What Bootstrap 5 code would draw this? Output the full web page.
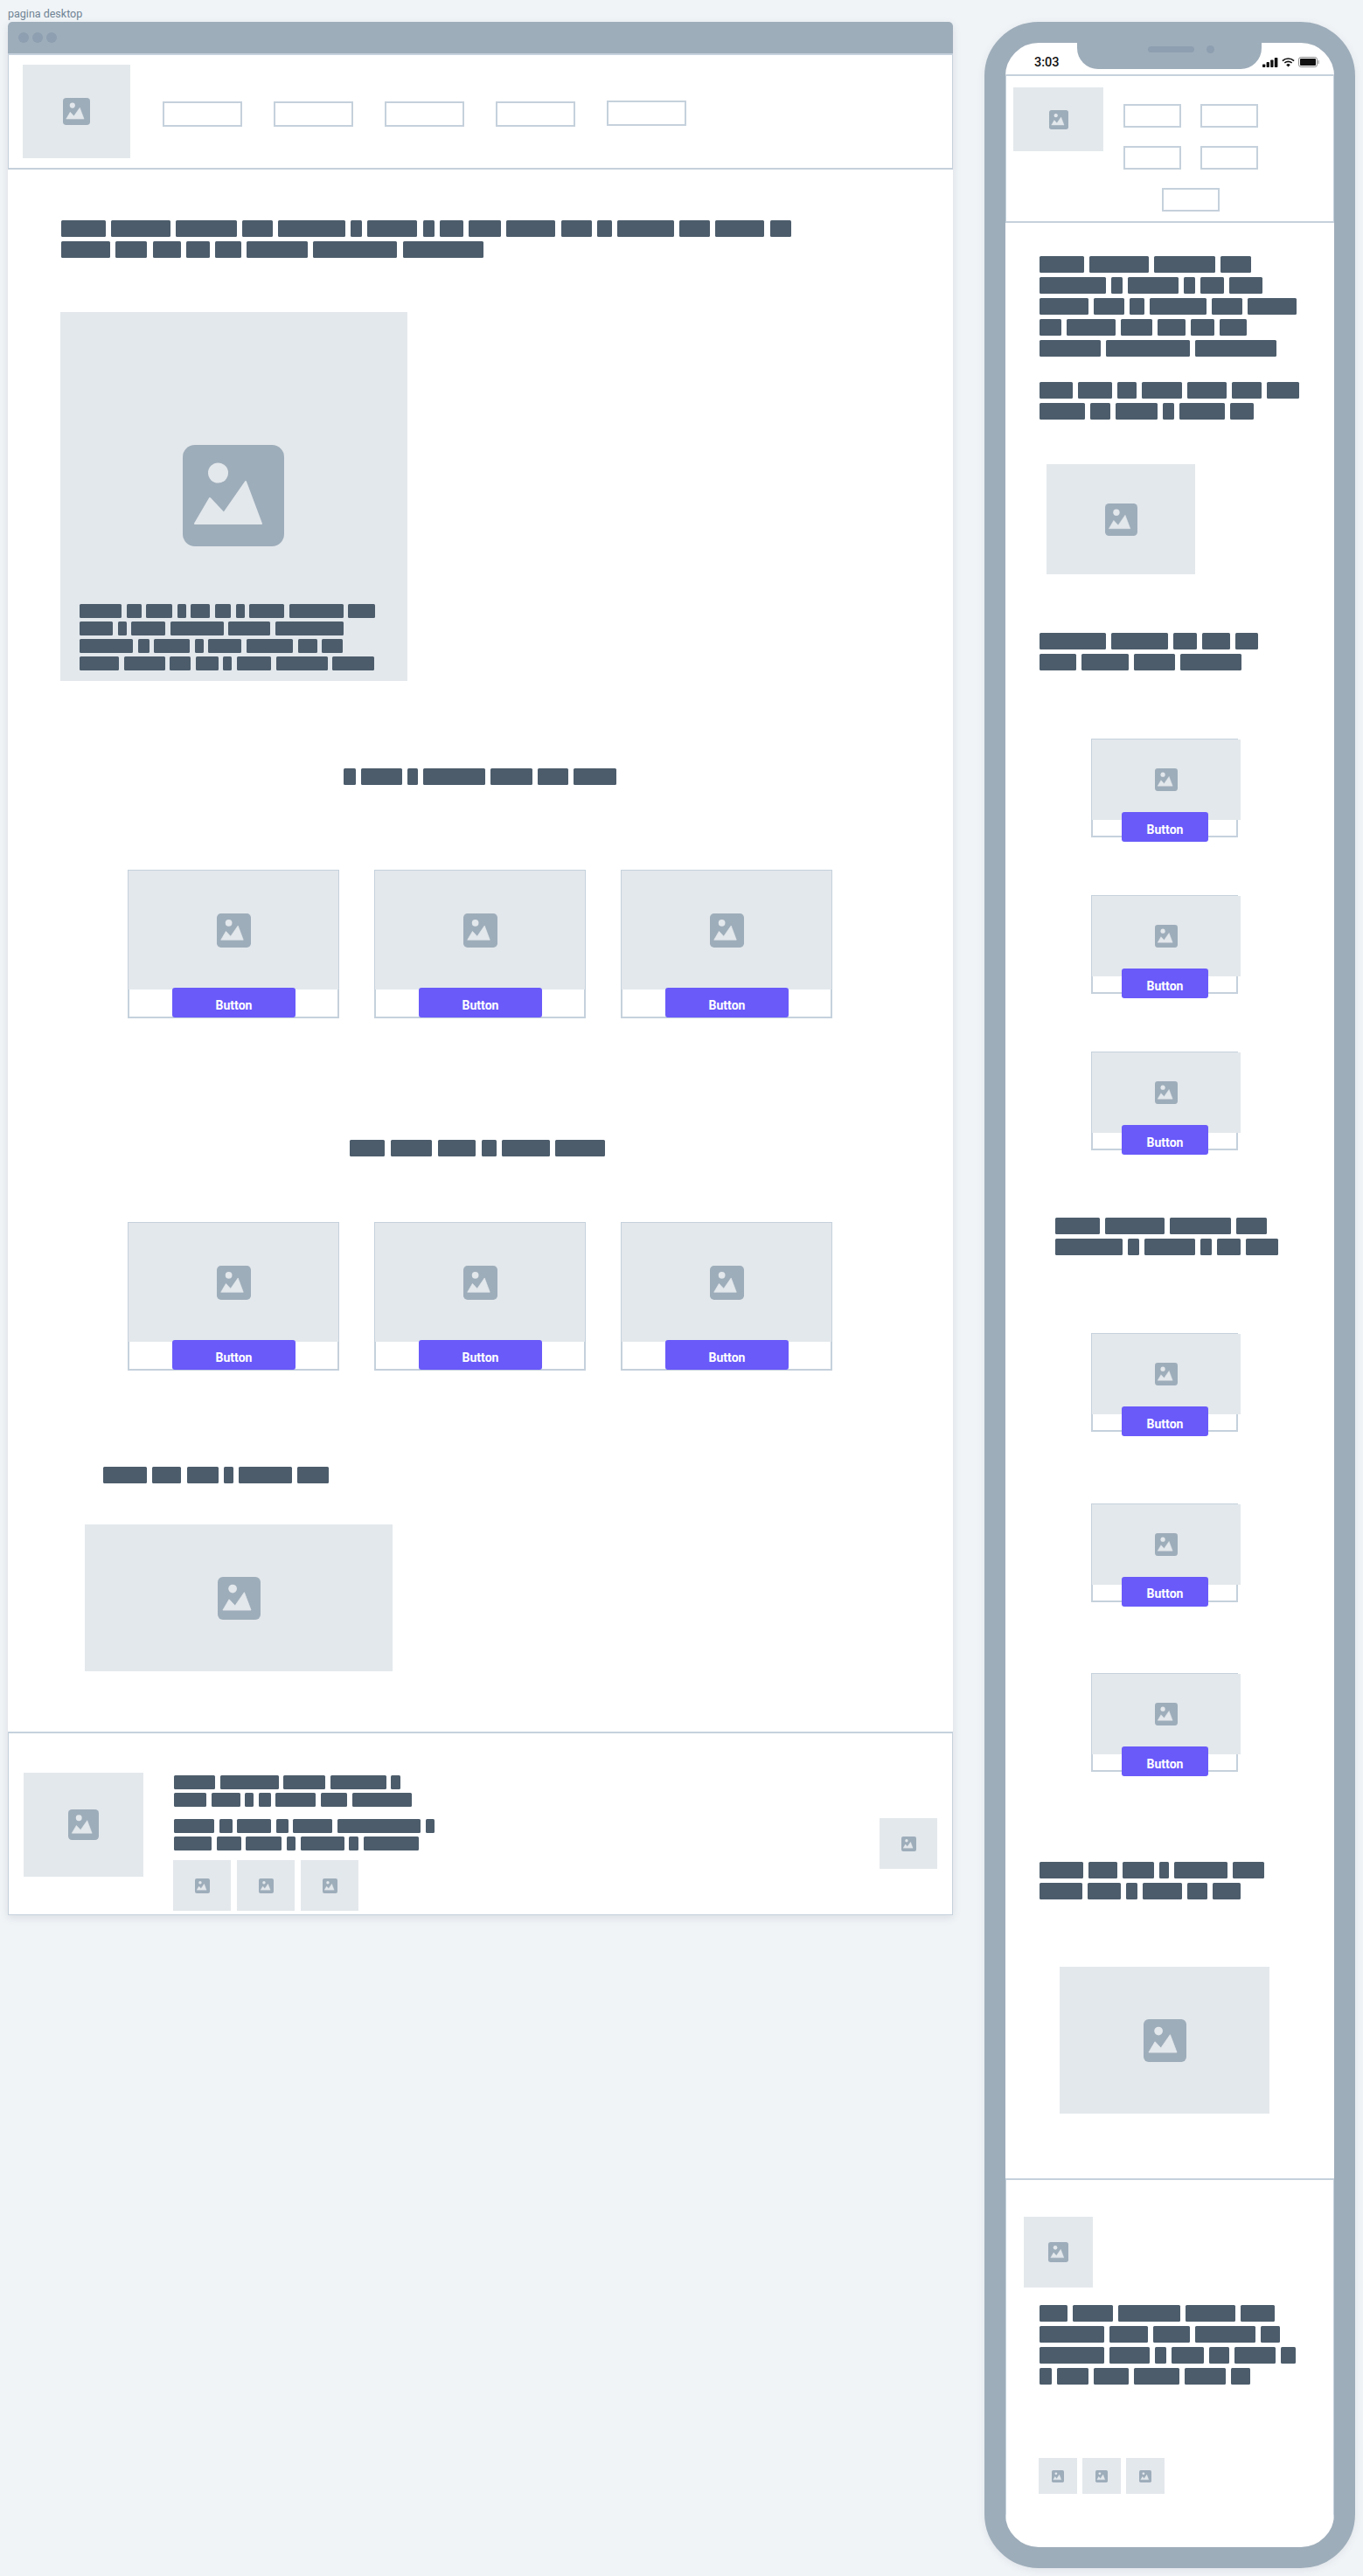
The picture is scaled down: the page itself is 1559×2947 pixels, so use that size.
<!DOCTYPE html>
<html lang="it">
<head>
    <meta charset="UTF-8">
    <title>Wireframe pagina desktop</title>
    <link href="https://cdn.jsdelivr.net/npm/bootstrap@5.3.0/dist/css/bootstrap.min.css" rel="stylesheet">
    <style>
        body { background: #f0f4f7; font-family: Roboto, "Liberation Sans", sans-serif; height: 2947px; overflow: hidden; }

        /* shared wireframe pieces */
        .wf-para { display: flex; flex-direction: column; gap: 5px; flex-shrink: 0; }
        .wf-line { display: flex; gap: 6px; }
        .wf-blk { display: block; height: 19px; background: #4c5c6b; border-radius: 1.5px; flex-shrink: 0; }
        .wf-wide .wf-line { gap: 6.3px; }
        .wf-tiny { gap: 4px; }
        .wf-tiny .wf-line { gap: 5.6px; }
        .wf-tiny .wf-blk { height: 16px; }
        .ph-img { background: #e3e8ec; display: flex; align-items: center; justify-content: center; flex-shrink: 0; }
        .nav-box { border: 2px solid #c5d1dc; background: #fff; flex-shrink: 0; }
        .wf-btn { display: block; background: #695af9; color: #fff; border: 0; border-radius: 3px; padding: 5px 0 0; height: 34px; font-size: 14px; font-weight: 700; line-height: 1; position: relative; }
        .wf-card { border: 2px solid #c5d1dc; background: #fff; flex-shrink: 0; }

        /* desktop frame */
        .desk-col { width: 1081px; margin-left: 9px; flex-shrink: 0; }
        .desk-label { height: 25px; font-size: 12.5px; line-height: 1; padding-top: 10px; color: #6f8394; }
        .desk-frame { background: #fff; height: 2166px; border-radius: 5px 5px 0 0; box-shadow: 0 3px 10px rgba(76, 92, 107, .14); }
        .desk-chrome { height: 38px; background: #9eadba; border-bottom: 2px solid #c5d1dc; border-radius: 5px 5px 0 0; padding-left: 12px; gap: 4px; }
        .desk-dot { width: 12px; height: 12px; border-radius: 50%; background: #8d9fb0; }
        .desk-head { height: 131px; border: 1px solid #c5d1dc; border-width: 0 1px 2px; }
        .desk-logo { width: 123px; height: 107px; margin: 11px 37px 0 16px; }
        .desk-nav { gap: 36px; margin-top: 53px; }
        .desk-nav .nav-box { width: 91px; height: 29px; }
        .desk-nav .nav-box:last-child { margin-top: -1px; }
        .desk-intro { margin: 58px 0 0 61px; }
        .desk-hero { width: 397px; height: 422px; margin: 62px 0 0 60px; padding-left: 22px; flex-direction: column; align-items: flex-start; justify-content: flex-start; }
        .desk-hero .ico-hero { margin: 152px 0 0 118px; }
        .desk-hero .wf-para { margin-top: 66px; }
        .sec-one { margin: 100px 0 0 384px; }
        .sec-two { margin: 139px 0 0 391px; }
        .sec-three { margin: 110px 0 0 109px; }
        .desk-cards { gap: 40px; margin: 97px 0 0 137px; }
        .sec-two + .desk-cards { margin-top: 75px; }
        .desk-card { width: 242px; height: 170px; }
        .desk-card .ph-img { width: 240px; height: 136px; margin: -1px 0 0 -1px; }
        .desk-card .wf-btn { width: 141px; margin: -2px 0 0 49px; }
        .desk-wide { width: 352px; height: 168px; margin: 47px 0 0 88px; }
        .desk-foot { height: 210px; margin-top: 69px; border: 1px solid #c5d1dc; border-top-width: 2px; }
        .desk-foot-logo { width: 137px; height: 119px; margin: 45px 35px 0 17px; }
        .desk-foot-text { padding-top: 48px; }
        .desk-foot-text .wf-para + .wf-para { margin-top: 14px; }
        .desk-thumbs { gap: 7px; margin: 11px 0 0 -1px; }
        .desk-thumb { width: 66px; height: 58px; }
        .desk-foot-side { margin: 97px 17px 0 auto; }

        /* icon sizes */
        .ico-hero { width: 116px; height: 116px; flex-shrink: 0; }
        .ico-31 { width: 31px; height: 31px; }
        .ico-39 { width: 39px; height: 39px; }
        .ico-49 { width: 49px; height: 49px; }
        .ico-35 { width: 35px; height: 35px; }
        .ico-17 { width: 17px; height: 17px; }
        .ico-21 { width: 22px; height: 22px; }
        .ico-26 { width: 26px; height: 26px; }
        .ico-37 { width: 37px; height: 37px; }
        .ico-23 { width: 23px; height: 23px; }
        .ico-14 { width: 14px; height: 14px; }

        /* phone */
        .ph-shell { width: 424px; height: 2913px; margin: 25px 0 0 36px; border: 24px solid #9eadba; border-radius: 62px; background: #fff; overflow: hidden; flex-shrink: 0; box-shadow: 0 2px 8px rgba(76, 92, 107, .1); }
        .ph-inner { border-radius: 38px; overflow: hidden; height: 100%; }
        .ph-notch { left: 82px; top: 0; width: 211px; height: 30px; background: #9eadba; border-radius: 0 0 24px 24px; }
        .ph-speaker { width: 53px; height: 7px; background: #8d9fb0; border-radius: 4px; }
        .ph-camera { width: 9px; height: 9px; background: #8d9fb0; border-radius: 50%; margin-left: 14px; }
        .ph-notch-row { padding: 3px 0 0 26px; }
        .ph-status { height: 36px; padding: 16px 17px 0 33px; color: #111; font-size: 14.5px; font-weight: 500; line-height: 1; }
        .ph-status-icons { gap: 4px; }
        .ph-head { height: 170px; border: 1px solid #c5d1dc; border-width: 2px 1px; }
        .ph-logo { width: 103px; height: 73px; margin: 13px 23px 0 8px; }
        .ph-nav { width: 154px; gap: 21px 22px; margin-top: 32px; }
        .ph-nav .nav-box { width: 66px; height: 27px; }
        .ph-para-a { margin: 38px 0 0 39px; }
        .ph-para-b { margin: 29px 0 0 39px; }
        .ph-img-a { width: 170px; height: 126px; margin: 51px 0 0 47px; }
        .ph-para-c { margin: 67px 0 0 39px; }
        .ph-cards-a { gap: 66px; margin: 78px 0 0 98px; }
        .ph-para-d { margin: 77px 0 0 57px; }
        .ph-cards-b { gap: 81.5px; margin: 89px 0 0 98px; }
        .ph-para-e { margin: 103px 0 0 39px; }
        .ph-img-b { width: 240px; height: 168px; margin: 77px 0 0 62px; }
        .ph-card { width: 168px; height: 113px; }
        .ph-card .ph-img { width: 170px; height: 92px; margin: -1px 0 0 -1px; }
        .ph-card .wf-btn { width: 99px; margin: -9px 0 0 33px; }
        .ph-foot { margin-top: 74px; flex-grow: 1; border: 1px solid #c5d1dc; border-width: 2px 1px 0; }
        .ph-foot-logo { width: 79px; height: 81px; margin: 42px 0 0 20px; }
        .ph-foot-text { margin: 20px 0 0 38px; }
        .ph-thumbs { gap: 6px; margin: 84px 0 0 37px; }
        .ph-thumb { width: 44px; height: 41px; }
    </style>
</head>
<body>
    <svg width="0" height="0" class="position-absolute">
        <symbol id="pic" viewBox="0 0 116 116">
            <rect width="116" height="116" rx="14" fill="#9eadba"/>
            <circle cx="40.5" cy="32" r="11.5" fill="#e3e8ec"/>
            <path d="M14 90 L31 61 L47 78 L72 42 L90 90 Z" fill="#e3e8ec" stroke="#e3e8ec" stroke-width="2" stroke-linejoin="round"/>
        </symbol>
    </svg>

    <div class="d-flex align-items-start">
        <!-- desktop -->
        <div class="desk-col">
            <div class="desk-label">pagina desktop</div>
            <div class="desk-frame d-flex flex-column align-items-stretch">
                <div class="desk-chrome d-flex align-items-center">
                    <span class="desk-dot"></span><span class="desk-dot"></span><span class="desk-dot"></span>
                </div>
                <div class="desk-head d-flex align-items-start">
                    <div class="ph-img desk-logo"><svg class="ico-31"><use href="#pic"/></svg></div>
                    <div class="desk-nav d-flex align-items-start">
                        <div class="nav-box"></div><div class="nav-box"></div><div class="nav-box"></div><div class="nav-box"></div><div class="nav-box"></div>
                    </div>
                </div>

                <div class="wf-para wf-wide desk-intro" data-l="50.5 68 69.5 35 76.5 13 57 13 27 37 56 35 17 64.5 35 56 24.5|56 36 32 27 30 69.5 96 92.6"></div>

                <div class="ph-img desk-hero">
                    <svg class="ico-hero"><use href="#pic"/></svg>
                    <div class="wf-para wf-tiny" data-l="48 17 30 10 22 18 10 40 62 31|38 10 39 61 48 78|61 13 41 10 38 53 22 24|45 47 24 26 10 39.5 58.5 48"></div>
                </div>

                <div class="wf-para sec-one" data-l="14.3 46.4 12.4 70.9 48.4 34.5 49"></div>
                <div class="desk-cards d-flex">
                    <div class="wf-card desk-card"><div class="ph-img"><svg class="ico-39"><use href="#pic"/></svg></div><button class="btn wf-btn">Button</button></div>
                    <div class="wf-card desk-card"><div class="ph-img"><svg class="ico-39"><use href="#pic"/></svg></div><button class="btn wf-btn">Button</button></div>
                    <div class="wf-card desk-card"><div class="ph-img"><svg class="ico-39"><use href="#pic"/></svg></div><button class="btn wf-btn">Button</button></div>
                </div>

                <div class="wf-para wf-wide sec-two" data-l="40.4 47.8 43.7 17 55 57"></div>
                <div class="desk-cards d-flex">
                    <div class="wf-card desk-card"><div class="ph-img"><svg class="ico-39"><use href="#pic"/></svg></div><button class="btn wf-btn">Button</button></div>
                    <div class="wf-card desk-card"><div class="ph-img"><svg class="ico-39"><use href="#pic"/></svg></div><button class="btn wf-btn">Button</button></div>
                    <div class="wf-card desk-card"><div class="ph-img"><svg class="ico-39"><use href="#pic"/></svg></div><button class="btn wf-btn">Button</button></div>
                </div>

                <div class="wf-para wf-wide sec-three" data-l="50 33 36 11 61 36"></div>
                <div class="ph-img desk-wide"><svg class="ico-49"><use href="#pic"/></svg></div>

                <div class="desk-foot d-flex align-items-start">
                    <div class="ph-img desk-foot-logo"><svg class="ico-35"><use href="#pic"/></svg></div>
                    <div class="desk-foot-text">
                        <div class="wf-para wf-tiny" data-l="47 67 48 64 10.5|37 33 10 14 46 30 68"></div>
                        <div class="wf-para wf-tiny" data-l="46 15 39 14 45 95 10.5|43 28 41 10.5 50 10.5 63"></div>
                        <div class="desk-thumbs d-flex">
                            <div class="ph-img desk-thumb"><svg class="ico-17"><use href="#pic"/></svg></div>
                            <div class="ph-img desk-thumb"><svg class="ico-17"><use href="#pic"/></svg></div>
                            <div class="ph-img desk-thumb"><svg class="ico-17"><use href="#pic"/></svg></div>
                        </div>
                    </div>
                    <div class="ph-img desk-thumb desk-foot-side"><svg class="ico-17"><use href="#pic"/></svg></div>
                </div>
            </div>
        </div>

        <!-- mobile -->
        <div class="ph-shell">
            <div class="ph-inner d-flex flex-column position-relative">
                <div class="ph-notch position-absolute">
                    <div class="ph-notch-row d-flex align-items-center justify-content-center">
                        <span class="ph-speaker"></span><span class="ph-camera"></span>
                    </div>
                </div>
                <div class="ph-status d-flex justify-content-between align-items-start">
                    <span>3:03</span>
                    <div class="ph-status-icons d-flex align-items-center">
                        <svg width="18" height="11" viewBox="0 0 18 11" fill="#111"><rect x="0" y="7.5" width="3.3" height="3.5" rx=".8"/><rect x="4.6" y="5" width="3.3" height="6" rx=".8"/><rect x="9.2" y="2.5" width="3.3" height="8.5" rx=".8"/><rect x="13.8" y="0" width="3.6" height="11" rx=".8"/></svg>
                        <svg width="15" height="11" viewBox="0 0 15 11"><path d="M.9 3.6a9.6 9.6 0 0 1 13.2 0M3.3 6a6.2 6.2 0 0 1 8.4 0" fill="none" stroke="#111" stroke-width="1.6"/><path d="M5.2 8.2a3.2 3.2 0 0 1 4.6 0L7.5 10.6z" fill="#111"/></svg>
                        <svg width="24" height="12" viewBox="0 0 24 12"><rect x=".5" y=".5" width="21" height="11" rx="2.6" fill="none" stroke="#8f8f8f"/><rect x="2" y="2" width="18" height="8" rx="1" fill="#111"/><rect x="22.6" y="4" width="1" height="4" rx=".5" fill="#8f8f8f"/></svg>
                    </div>
                </div>
                <div class="ph-head d-flex align-items-start flex-shrink-0">
                    <div class="ph-img ph-logo"><svg class="ico-21"><use href="#pic"/></svg></div>
                    <div class="ph-nav d-flex flex-wrap justify-content-center">
                        <div class="nav-box"></div><div class="nav-box"></div><div class="nav-box"></div><div class="nav-box"></div><div class="nav-box"></div>
                    </div>
                </div>

                <div class="wf-para ph-para-a" data-l="51 68 70 35|76 13 58 13 27 38|56 35 17 65 35 56|25 56 36 32 27 31|70 96 93"></div>
                <div class="wf-para ph-para-b" data-l="38 39 22 46 45 34 37|52 23 48 13 52 27"></div>
                <div class="ph-img ph-img-a"><svg class="ico-37"><use href="#pic"/></svg></div>
                <div class="wf-para ph-para-c" data-l="76 65 27 32 26|42 54 47 70"></div>

                <div class="ph-cards-a d-flex flex-column">
                    <div class="wf-card ph-card"><div class="ph-img"><svg class="ico-26"><use href="#pic"/></svg></div><button class="btn wf-btn">Button</button></div>
                    <div class="wf-card ph-card"><div class="ph-img"><svg class="ico-26"><use href="#pic"/></svg></div><button class="btn wf-btn">Button</button></div>
                    <div class="wf-card ph-card"><div class="ph-img"><svg class="ico-26"><use href="#pic"/></svg></div><button class="btn wf-btn">Button</button></div>
                </div>

                <div class="wf-para ph-para-d" data-l="51 68 70 35|77 13 58 13 27 37"></div>

                <div class="ph-cards-b d-flex flex-column">
                    <div class="wf-card ph-card"><div class="ph-img"><svg class="ico-26"><use href="#pic"/></svg></div><button class="btn wf-btn">Button</button></div>
                    <div class="wf-card ph-card"><div class="ph-img"><svg class="ico-26"><use href="#pic"/></svg></div><button class="btn wf-btn">Button</button></div>
                    <div class="wf-card ph-card"><div class="ph-img"><svg class="ico-26"><use href="#pic"/></svg></div><button class="btn wf-btn">Button</button></div>
                </div>

                <div class="wf-para ph-para-e" data-l="50 33 36 11 61 36|49 38 13 45 23 32"></div>
                <div class="ph-img ph-img-b"><svg class="ico-49"><use href="#pic"/></svg></div>

                <div class="ph-foot">
                    <div class="ph-img ph-foot-logo"><svg class="ico-23"><use href="#pic"/></svg></div>
                    <div class="wf-para ph-foot-text" data-l="32 46 71 57 39|74 44 42 69 22|74 46 13 37 23 47 17|14 36 40 52 47 22"></div>
                    <div class="ph-thumbs d-flex">
                        <div class="ph-img ph-thumb"><svg class="ico-14"><use href="#pic"/></svg></div>
                        <div class="ph-img ph-thumb"><svg class="ico-14"><use href="#pic"/></svg></div>
                        <div class="ph-img ph-thumb"><svg class="ico-14"><use href="#pic"/></svg></div>
                    </div>
                </div>
            </div>
        </div>
    </div>

    <script src="https://cdn.jsdelivr.net/npm/bootstrap@5.3.0/dist/js/bootstrap.bundle.min.js"></script>
    <script>
        // placeholder text: every number in data-l is one word's width, | starts a new line
        document.querySelectorAll('.wf-para').forEach(function (para) {
            para.dataset.l.split('|').forEach(function (row) {
                var line = document.createElement('div');
                line.className = 'wf-line';
                row.split(' ').forEach(function (w) {
                    var blk = document.createElement('span');
                    blk.className = 'wf-blk';
                    blk.style.width = w + 'px';
                    line.appendChild(blk);
                });
                para.appendChild(line);
            });
        });
    </script>
</body>
</html>
